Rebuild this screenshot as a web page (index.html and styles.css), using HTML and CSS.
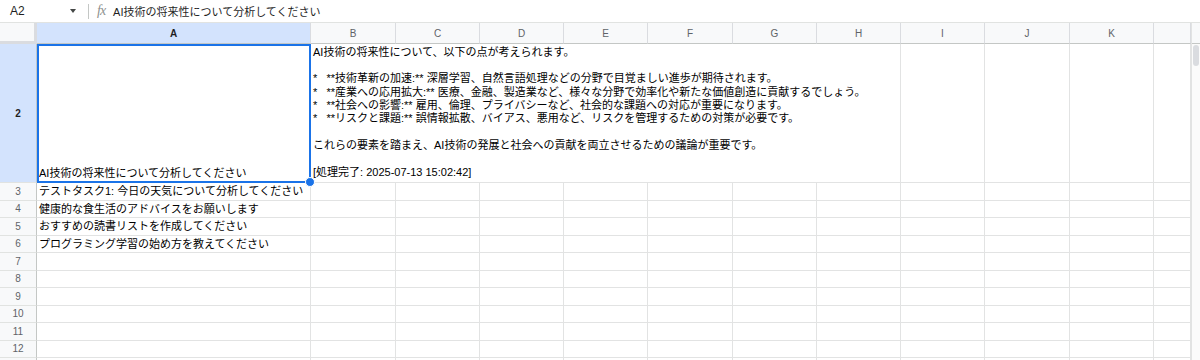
FILE: index.html
```html
<!DOCTYPE html>
<html lang="ja">
<head>
  <meta charset="UTF-8" />
  <title>Sheet</title>
  <link rel="stylesheet" href="styles.css">
</head>
<body>

  <!-- Formula bar -->
  <div class="formula-bar">
    <div class="name-box">A2</div>
    <span class="caret"></span>
    <span class="divider"></span>
    <span class="fx">fx</span>
    <div class="formula">AI技術の将来性について分析してください</div>
  </div>

  <div class="sheet">
    <div class="grid">
      <div class="row head">
        <div class="corner"></div>
        <div class="ch sel">A</div>
        <div class="ch">B</div>
        <div class="ch">C</div>
        <div class="ch">D</div>
        <div class="ch">E</div>
        <div class="ch">F</div>
        <div class="ch">G</div>
        <div class="ch">H</div>
        <div class="ch">I</div>
        <div class="ch">J</div>
        <div class="ch">K</div>
        <div class="ch"></div>
      </div>

      <div class="row tall">
        <div class="rh sel">2</div>
        <div class="c active">AI技術の将来性について分析してください</div>
        <div class="c answer">AI技術の将来性について、以下の点が考えられます。

*   **技術革新の加速:** 深層学習、自然言語処理などの分野で目覚ましい進歩が期待されます。
*   **産業への応用拡大:** 医療、金融、製造業など、様々な分野で効率化や新たな価値創造に貢献するでしょう。
*   **社会への影響:** 雇用、倫理、プライバシーなど、社会的な課題への対応が重要になります。
*   **リスクと課題:** 誤情報拡散、バイアス、悪用など、リスクを管理するための対策が必要です。

これらの要素を踏まえ、AI技術の発展と社会への貢献を両立させるための議論が重要です。

[処理完了: 2025-07-13 15:02:42]</div>
        <div class="c"></div><div class="c"></div><div class="c"></div><div class="c"></div>
      </div>

      <div class="row">
        <div class="rh">3</div>
        <div class="c">テストタスク1: 今日の天気について分析してください</div>
        <div class="c"></div><div class="c"></div><div class="c"></div><div class="c"></div><div class="c"></div>
        <div class="c"></div><div class="c"></div><div class="c"></div><div class="c"></div><div class="c"></div><div class="c"></div>
      </div>
      <div class="row">
        <div class="rh">4</div>
        <div class="c">健康的な食生活のアドバイスをお願いします</div>
        <div class="c"></div><div class="c"></div><div class="c"></div><div class="c"></div><div class="c"></div>
        <div class="c"></div><div class="c"></div><div class="c"></div><div class="c"></div><div class="c"></div><div class="c"></div>
      </div>
      <div class="row">
        <div class="rh">5</div>
        <div class="c">おすすめの読書リストを作成してください</div>
        <div class="c"></div><div class="c"></div><div class="c"></div><div class="c"></div><div class="c"></div>
        <div class="c"></div><div class="c"></div><div class="c"></div><div class="c"></div><div class="c"></div><div class="c"></div>
      </div>
      <div class="row">
        <div class="rh">6</div>
        <div class="c">プログラミング学習の始め方を教えてください</div>
        <div class="c"></div><div class="c"></div><div class="c"></div><div class="c"></div><div class="c"></div>
        <div class="c"></div><div class="c"></div><div class="c"></div><div class="c"></div><div class="c"></div><div class="c"></div>
      </div>
      <div class="row">
        <div class="rh">7</div>
        <div class="c"></div><div class="c"></div><div class="c"></div><div class="c"></div><div class="c"></div><div class="c"></div>
        <div class="c"></div><div class="c"></div><div class="c"></div><div class="c"></div><div class="c"></div><div class="c"></div>
      </div>
      <div class="row">
        <div class="rh">8</div>
        <div class="c"></div><div class="c"></div><div class="c"></div><div class="c"></div><div class="c"></div><div class="c"></div>
        <div class="c"></div><div class="c"></div><div class="c"></div><div class="c"></div><div class="c"></div><div class="c"></div>
      </div>
      <div class="row">
        <div class="rh">9</div>
        <div class="c"></div><div class="c"></div><div class="c"></div><div class="c"></div><div class="c"></div><div class="c"></div>
        <div class="c"></div><div class="c"></div><div class="c"></div><div class="c"></div><div class="c"></div><div class="c"></div>
      </div>
      <div class="row">
        <div class="rh">10</div>
        <div class="c"></div><div class="c"></div><div class="c"></div><div class="c"></div><div class="c"></div><div class="c"></div>
        <div class="c"></div><div class="c"></div><div class="c"></div><div class="c"></div><div class="c"></div><div class="c"></div>
      </div>
      <div class="row">
        <div class="rh">11</div>
        <div class="c"></div><div class="c"></div><div class="c"></div><div class="c"></div><div class="c"></div><div class="c"></div>
        <div class="c"></div><div class="c"></div><div class="c"></div><div class="c"></div><div class="c"></div><div class="c"></div>
      </div>
      <div class="row">
        <div class="rh">12</div>
        <div class="c"></div><div class="c"></div><div class="c"></div><div class="c"></div><div class="c"></div><div class="c"></div>
        <div class="c"></div><div class="c"></div><div class="c"></div><div class="c"></div><div class="c"></div><div class="c"></div>
      </div>
      <div class="row">
        <div class="rh"></div>
        <div class="c"></div><div class="c"></div><div class="c"></div><div class="c"></div><div class="c"></div><div class="c"></div>
        <div class="c"></div><div class="c"></div><div class="c"></div><div class="c"></div><div class="c"></div><div class="c"></div>
      </div>
    </div>

    <div class="scrollbar">
      <div class="scroll-head"></div>
      <div class="thumb"></div>
    </div>
  </div>

</body>
</html>
```

FILE: styles.css
```css
* {
  box-sizing: border-box;
}

body {
  margin: 0;
  font-family: "Liberation Sans", "Noto Sans CJK JP", sans-serif;
  background: white;
  color: #1f1f1f;
  height: 360px;
  overflow: hidden;
}

/* Formula bar */
.formula-bar {
  display: flex;
  align-items: center;
  height: 23px;
  border-bottom: 1px solid #e1e3e1;
}

.name-box {
  width: 70px;
  padding-left: 10px;
  font-size: 12px;
}

.caret {
  width: 0;
  height: 0;
  border-left: 3px solid transparent;
  border-right: 3px solid transparent;
  border-top: 4px solid #444746;
  margin-right: 12px;
}

.divider {
  width: 1px;
  height: 15px;
  background: #c4c7c5;
  margin-right: 8px;
}

.fx {
  font-family: "Liberation Serif", serif;
  font-style: italic;
  font-size: 14px;
  color: #8e918f;
  margin-right: 8px;
  letter-spacing: -1px;
}

.formula {
  font-size: 11px;
}

/* Sheet grid */
.sheet {
  display: flex;
}

.grid {
  width: 1191px;
}

.row {
  display: grid;
  grid-template-columns: 37px 274px 85px 84px 84px 84px 85px 84px 84px 84px 85px 84px 37px;
  height: 17.5px;
}

.row.head {
  height: 21px;
}

.row.tall {
  height: 139px;
}

.corner {
  background: #f8f9fa;
  border-right: 3px solid #dadce0;
  border-bottom: 3px solid #dadce0;
}

.ch {
  background: #f8f9fa;
  border-right: 1px solid #dadce0;
  border-bottom: 1px solid #c4c7c5;
  color: #5f6368;
  font-size: 10px;
  display: flex;
  align-items: center;
  justify-content: center;
}

.rh {
  background: #f8f9fa;
  border-right: 1px solid #c4c7c5;
  border-bottom: 1px solid #e1e3e1;
  color: #5f6368;
  font-size: 10px;
  display: flex;
  align-items: center;
  justify-content: center;
}

.ch.sel,
.rh.sel {
  background: #d3e3fd;
  color: #1f1f1f;
  font-weight: bold;
}

.c {
  border-right: 1px solid #e2e3e3;
  border-bottom: 1px solid #e2e3e3;
  font-size: 11px;
  line-height: 16px;
  padding: 0 2px;
  white-space: nowrap;
  overflow: hidden;
  color: #000;
}

.tall .c {
  display: flex;
  align-items: flex-end;
  padding-bottom: 1px;
}

.c.answer {
  grid-column: span 7;
  white-space: pre;
  line-height: 13.33px;
  padding-bottom: 3px;
  overflow: visible;
}

.c.active {
  position: relative;
  overflow: visible;
}

.c.active::after {
  content: "";
  position: absolute;
  top: 0;
  left: 0;
  right: -1px;
  bottom: -1px;
  border: 2px solid #1a73e8;
}

.c.active::before {
  content: "";
  position: absolute;
  right: -5px;
  bottom: -5px;
  width: 8px;
  height: 8px;
  border-radius: 50%;
  background: #1a73e8;
  border: 1px solid white;
  z-index: 2;
}

/* Scrollbar */
.scrollbar {
  width: 9px;
  border-left: 1px solid #e2e3e3;
  background: #fbfbfb;
}

.scroll-head {
  height: 21px;
  background: #f8f9fa;
  border-bottom: 1px solid #c4c7c5;
}

.thumb {
  margin: 1px 0 0 1px;
  width: 6px;
  height: 21px;
  border-radius: 3px;
  background: #dadce0;
}
```
